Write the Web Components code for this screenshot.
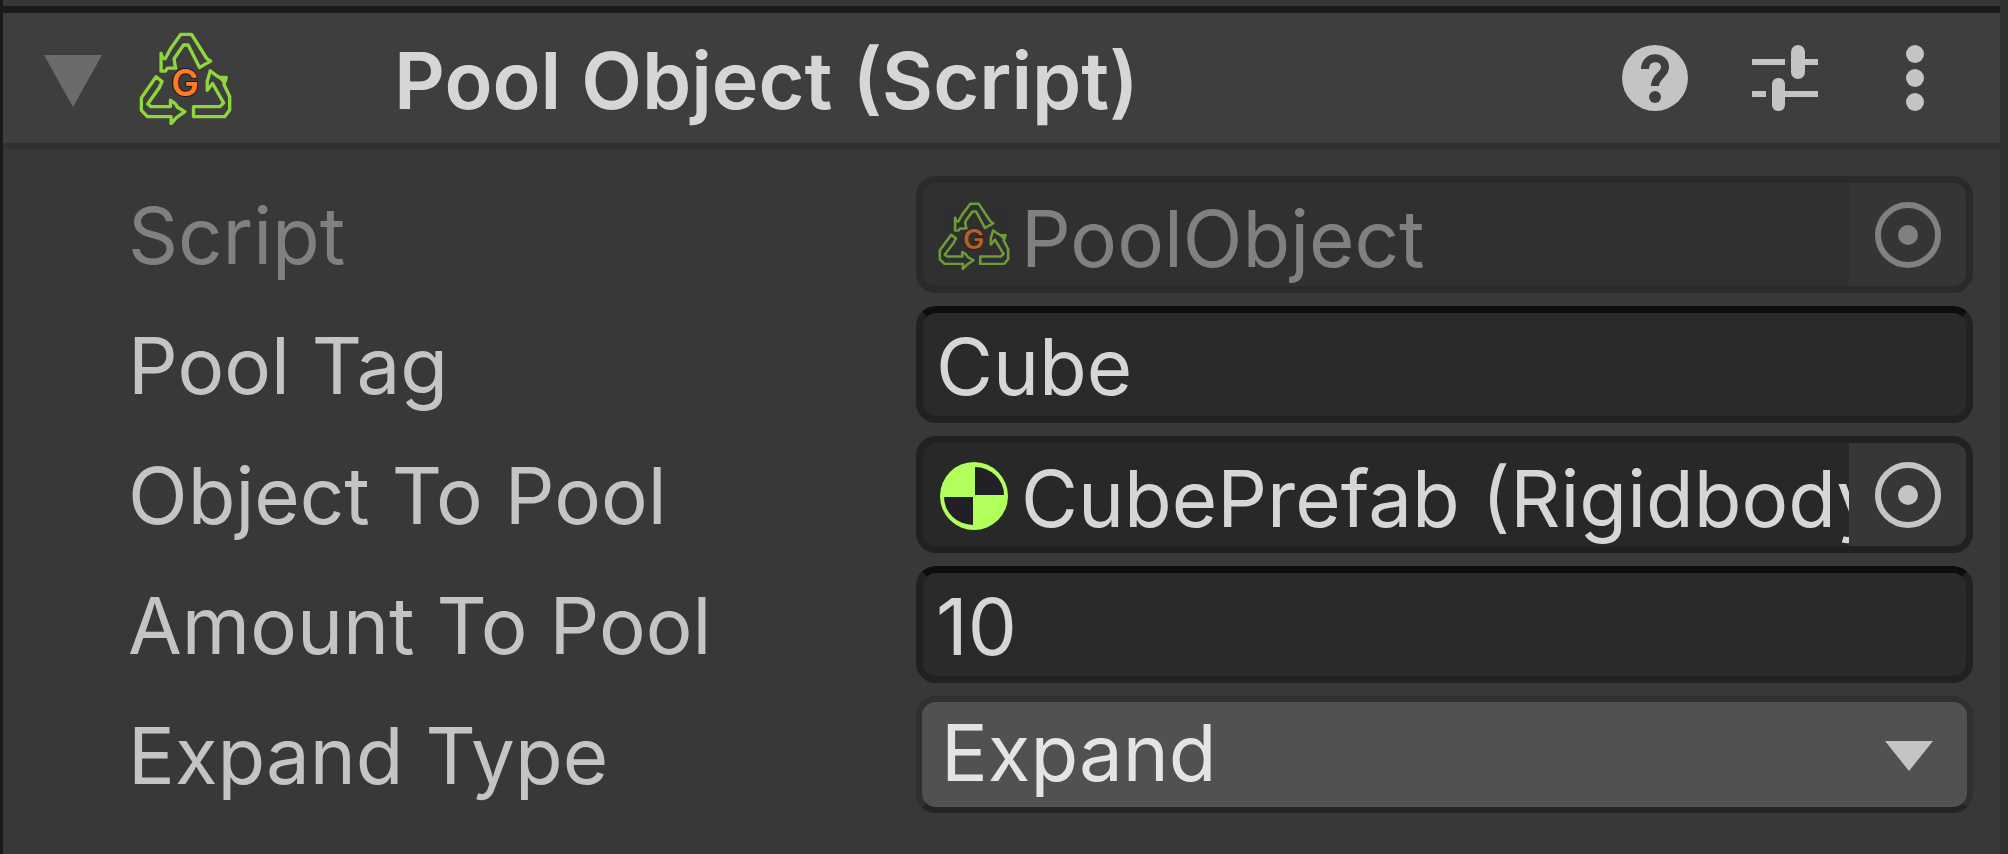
<!DOCTYPE html>
<html lang="en">
<head>
<meta charset="utf-8">
<meta name="viewport" content="width=device-width, initial-scale=1">
<title>Inspector</title>
<style>
  html, body { margin: 0; min-height: 100%; background: #383838; }
  body {
    font-family: Inter, "Liberation Sans", sans-serif;
    font-size: 78px;
    line-height: 96px;
    color: #c4c4c4;
    display: flex;
    min-height: 100vh;
  }
</style>
</head>
<body>
<inspector-panel>
  <component-header slot="header" heading="Pool Object (Script)"></component-header>
  <object-property label="Script" value="PoolObject" icon="pool" disabled></object-property>
  <text-property label="Pool Tag" value="Cube"></text-property>
  <object-property label="Object To Pool" value="CubePrefab (Rigidbody)" icon="body"></object-property>
  <text-property label="Amount To Pool" value="10" mode="numeric"></text-property>
  <enum-property label="Expand Type" value="Expand"></enum-property>
</inspector-panel>

<script>
class InspectorPanel extends HTMLElement {
  connectedCallback() {
    this.attachShadow({ mode: 'open' }).innerHTML = `
      <style>
        :host {
          flex: 1; min-width: 0; box-sizing: border-box; display: flex; flex-direction: column;
          background: #383838; border-left: 3px solid #191919; border-right: 8px solid #303030;
        }
        header { margin-top: 6px; border-top: 7px solid #1a1a1a; border-bottom: 6px solid #303030; background: #3e3e3e; }
        main { display: grid; gap: 13px; padding: 27px 27px 39px 125px; }
      </style>
      <header><slot name="header"></slot></header>
      <main><slot></slot></main>`;
  }
}

class PoolIcon extends HTMLElement {
  connectedCallback() {
    this.attachShadow({ mode: 'open' }).innerHTML = `
      <style>
        :host { display: block; }
        svg { display: block; width: 100%; height: 100%; }
        text { font: 600 110px Inter, "Liberation Sans", sans-serif; }
      </style>
      <svg viewBox="420 94 278 278" preserveAspectRatio="none" aria-hidden="true">
        <g fill="none" stroke="#8fd63c" stroke-width="10" stroke-linejoin="round">
          <path d="M486 158V211H499L505 202H530L527 190L525 174L553 133H567L601 200L613 193L634 181L623 174L577 101H545L515 143L498 174L490 171Z"/>
          <path d="M471 228L489 242L481 260L446 309L456 317H514V298L528 308L535 319L557 332L532 350L516 368V347H445L427 328V291Z"/>
          <path d="M583 317H662L673 306L640 248L624 268V242L633 210L651 224L661 230H681L674 251L691 287V327L676 347H583Z"/>
        </g>
        <path d="M656 230H684L675 252Z" fill="#8fd63c"/>
        <text x="558" y="286" text-anchor="middle" fill="#ff7a24" stroke="#191919" stroke-width="6" paint-order="stroke">G</text>
      </svg>`;
  }
}

class BodyIcon extends HTMLElement {
  connectedCallback() {
    this.attachShadow({ mode: 'open' }).innerHTML = `
      <style>:host { display: block; } svg { display: block; width: 100%; height: 100%; }</style>
      <svg viewBox="0 0 68 68" aria-hidden="true">
        <circle cx="34" cy="34" r="34" fill="#b0ff5a"/>
        <path d="M35 5A29 28 0 0 1 64 33H35ZM33 63A29 28 0 0 1 4 35H33Z" fill="#231f26"/>
      </svg>`;
  }
}

class ComponentHeader extends HTMLElement {
  connectedCallback() {
    this.attachShadow({ mode: 'open' }).innerHTML = `
      <style>
        :host { display: flex; align-items: center; height: 130px; padding: 0 20px 0 38px; color: #d6d6d6; }
        button { border: 0; padding: 0; background: none; color: #c4c4c4; font: inherit; cursor: pointer; }
        svg { display: block; }
        .fold { width: 64px; height: 60px; display: grid; place-items: end center; margin-right: 34px; }
        pool-icon { width: 93px; height: 93px; flex: none; }
        h1 { flex: 1; min-width: 0; margin: 0 0 0 162px; padding-top: 3px; font-size: 79px; line-height: 96px; font-weight: 600; white-space: nowrap; overflow: hidden; }
        .tool { width: 130px; height: 130px; display: grid; place-items: center; flex: none; }
      </style>
      <button class="fold" aria-label="Collapse" aria-expanded="true">
        <svg width="60" height="54"><path d="M1 1H59L30 53Z" fill="#6b6b6b"/></svg>
      </button>
      <pool-icon></pool-icon>
      <h1></h1>
      <button class="tool" aria-label="Help">
        <svg width="66" height="66" fill="none"><circle cx="33" cy="33" r="33" fill="#c4c4c4"/>
          <path d="M23 24C23 10 43 10 43 22C43 30 33 31 33 41" stroke="#3e3e3e" stroke-width="8"/>
          <circle cx="33" cy="52" r="6" fill="#3e3e3e"/></svg>
      </button>
      <button class="tool" aria-label="Presets">
        <svg width="66" height="66" fill="#c4c4c4"><path d="M0 14H33V20H0ZM52 14H66V20H52ZM0 46H14V52H0ZM32 46H66V52H32Z"/>
          <rect x="39" y="0" width="14" height="34" rx="7"/><rect x="20" y="33" width="13" height="33" rx="6"/></svg>
      </button>
      <button class="tool" aria-label="More options">
        <svg width="18" height="66" fill="#c4c4c4"><circle cx="9" cy="9" r="9"/><circle cx="9" cy="33" r="9"/><circle cx="9" cy="57" r="9"/></svg>
      </button>`;
    this.shadowRoot.querySelector('h1').textContent = this.getAttribute('heading');
  }
}

/* Shared two-column row: label on the left, control on the right. */
class PropertyRow extends HTMLElement {
  connectedCallback() {
    this.attachShadow({ mode: 'open' }).innerHTML = `
      <style>
        :host { display: grid; grid-template-columns: minmax(0, 41fr) minmax(0, 55fr); align-items: center; height: 117px; }
        :host([disabled]) { color: #808080; }
        label { padding-top: 3px; white-space: nowrap; overflow: hidden; }
        input, select, button { font: inherit; color: inherit; margin: 0; outline: none; }
        ${this.styles()}
      </style>
      <label for="control"></label>${this.control()}`;
    this.shadowRoot.querySelector('label').textContent = this.getAttribute('label');
  }
}

class TextProperty extends PropertyRow {
  styles() {
    return `input {
      box-sizing: border-box; width: 100%; height: 117px; padding: 3px 13px 0; border: 7px solid #212121; border-top-color: #0d0d0d;
      border-radius: 20px; background: #2a2a2a; color: #d6d6d6;
    }`;
  }
  control() {
    return `<input id="control" type="text" inputmode="${this.getAttribute('mode') || 'text'}" value="${this.getAttribute('value')}">`;
  }
}

class ObjectProperty extends PropertyRow {
  styles() {
    return `
      .field { box-sizing: border-box; height: 117px; display: flex; align-items: center; padding-left: 15px;
        border: 7px solid #212121; border-radius: 20px; background: #282828; color: #d6d6d6; overflow: hidden; }
      .icon { width: 72px; height: 68px; flex: none; margin-top: 3px; }
      input { flex: 1; min-width: 0; height: 103px; border: 0; padding: 8px 0 0 11px; box-sizing: border-box; background: none; text-overflow: clip; }
      button { flex: none; width: 117px; height: 103px; border: 0; padding: 0; background: #373737; color: #c4c4c4; display: grid; place-items: center; }
      svg { display: block; }
      :host([disabled]) .field { border-color: #2a2a2a; background: #303030; color: #808080; }
      :host([disabled]) button { background: #353535; color: #808080; }
      :host([disabled]) .icon { opacity: .65; }`;
  }
  control() {
    const off = this.hasAttribute('disabled') ? 'disabled' : '';
    const tag = this.getAttribute('icon') + '-icon';
    return `<div class="field"><${tag} class="icon"></${tag}>
      <input id="control" type="text" readonly ${off} value="${this.getAttribute('value')}">
      <button aria-label="Select object" ${off}>
        <svg width="66" height="66"><circle cx="33" cy="33" r="30" fill="none" stroke="currentColor" stroke-width="6"/><circle cx="33" cy="33" r="10" fill="currentColor"/></svg>
      </button></div>`;
  }
}

class EnumProperty extends PropertyRow {
  styles() {
    return `
      .popup { display: grid; align-items: center; box-sizing: border-box; height: 117px; }
      .popup > * { grid-area: 1 / 1; }
      select { appearance: none; box-sizing: border-box; width: 100%; height: 117px; padding: 0 104px 4px 19px;
        border: 6px solid #303030; border-bottom-color: #242424; border-radius: 20px; background: #515151; color: #e4e4e4; }
      svg { display: block; justify-self: end; margin: 3px 40px 0 0; pointer-events: none; }`;
  }
  control() {
    return `<div class="popup"><select id="control"><option>${this.getAttribute('value')}</option></select>
      <svg width="48" height="30" aria-hidden="true"><path d="M0 0H48L24 30Z" fill="#c4c4c4"/></svg></div>`;
  }
}

customElements.define('pool-icon', PoolIcon);
customElements.define('body-icon', BodyIcon);
customElements.define('component-header', ComponentHeader);
customElements.define('text-property', TextProperty);
customElements.define('object-property', ObjectProperty);
customElements.define('enum-property', EnumProperty);
customElements.define('inspector-panel', InspectorPanel);
</script>
</body>
</html>
